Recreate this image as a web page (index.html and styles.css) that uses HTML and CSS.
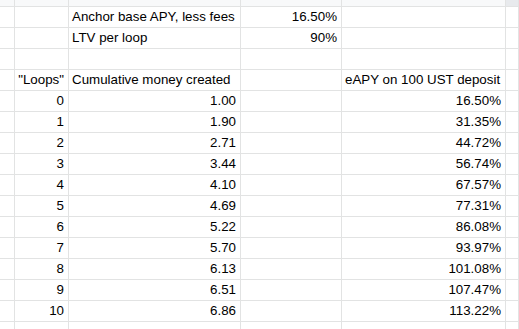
FILE: index.html
```html
<!DOCTYPE html>
<html>
<head>
<meta charset="utf-8">
<link rel="stylesheet" href="styles.css">
</head>
<body>
<div class="sheet">
  <div class="cell hdr"></div><div class="cell hdr"></div><div class="cell hdr"></div><div class="cell hdr"></div><div class="cell hdr"></div><div class="cell hdr hdr-sel"></div>

  <div class="cell"></div><div class="cell"></div><div class="cell">Anchor base APY, less fees</div><div class="cell num">16.50%</div><div class="cell"></div><div class="cell"></div>
  <div class="cell"></div><div class="cell"></div><div class="cell">LTV per loop</div><div class="cell num">90%</div><div class="cell"></div><div class="cell"></div>
  <div class="cell"></div><div class="cell"></div><div class="cell"></div><div class="cell"></div><div class="cell"></div><div class="cell"></div>
  <div class="cell"></div><div class="cell num">"Loops"</div><div class="cell">Cumulative money created</div><div class="cell"></div><div class="cell">eAPY on 100 UST deposit</div><div class="cell"></div>

  <div class="cell"></div><div class="cell num">0</div><div class="cell num">1.00</div><div class="cell"></div><div class="cell num">16.50%</div><div class="cell"></div>
  <div class="cell"></div><div class="cell num">1</div><div class="cell num">1.90</div><div class="cell"></div><div class="cell num">31.35%</div><div class="cell"></div>
  <div class="cell"></div><div class="cell num">2</div><div class="cell num">2.71</div><div class="cell"></div><div class="cell num">44.72%</div><div class="cell"></div>
  <div class="cell"></div><div class="cell num">3</div><div class="cell num">3.44</div><div class="cell"></div><div class="cell num">56.74%</div><div class="cell"></div>
  <div class="cell"></div><div class="cell num">4</div><div class="cell num">4.10</div><div class="cell"></div><div class="cell num">67.57%</div><div class="cell"></div>
  <div class="cell"></div><div class="cell num">5</div><div class="cell num">4.69</div><div class="cell"></div><div class="cell num">77.31%</div><div class="cell"></div>
  <div class="cell"></div><div class="cell num">6</div><div class="cell num">5.22</div><div class="cell"></div><div class="cell num">86.08%</div><div class="cell"></div>
  <div class="cell"></div><div class="cell num">7</div><div class="cell num">5.70</div><div class="cell"></div><div class="cell num">93.97%</div><div class="cell"></div>
  <div class="cell"></div><div class="cell num">8</div><div class="cell num">6.13</div><div class="cell"></div><div class="cell num">101.08%</div><div class="cell"></div>
  <div class="cell"></div><div class="cell num">9</div><div class="cell num">6.51</div><div class="cell"></div><div class="cell num">107.47%</div><div class="cell"></div>
  <div class="cell"></div><div class="cell num">10</div><div class="cell num">6.86</div><div class="cell"></div><div class="cell num">113.22%</div><div class="cell"></div>

  <div class="cell"></div><div class="cell"></div><div class="cell"></div><div class="cell"></div><div class="cell"></div><div class="cell"></div>
</div>
</body>
</html>
```
FILE: styles.css
```css
html, body {
  margin: 0;
  padding: 0;
  background: #ffffff;
  overflow: hidden;
}
.sheet {
  display: grid;
  grid-template-columns: 15px 54px 172px 101px 164px 13px;
  grid-template-rows: 7px repeat(15, 21px) 21px;
  width: 519px;
  font-family: "Liberation Sans", Arial, sans-serif;
  font-size: 13.33px;
  color: #000000;
}
.cell {
  box-sizing: border-box;
  border-right: 1px solid #e2e3e3;
  border-bottom: 1px solid #e2e3e3;
  padding: 0 3px 2px 3px;
  display: flex;
  align-items: flex-end;
  justify-content: flex-start;
  line-height: 16px;
  white-space: nowrap;
  overflow: visible;
}
.num {
  justify-content: flex-end;
  padding-right: 4px;
}
.hdr {
  background: #f8f9fa;
  border-bottom-color: #e2e3e3;
  padding: 0;
}
.hdr-sel {
  background: #e8eaed;
}
```
